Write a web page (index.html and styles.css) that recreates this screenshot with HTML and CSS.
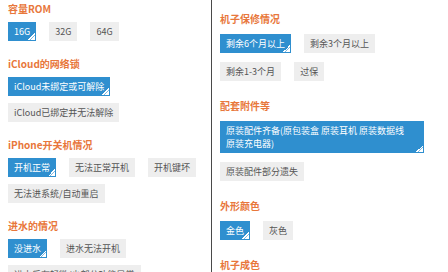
FILE: index.html
```html
<!DOCTYPE html>
<html lang="zh-CN">
<head>
<meta charset="utf-8">
<title>回收评估</title>
<link rel="stylesheet" href="styles.css">
</head>
<body>
<div class="page">
  <div class="col col-left">
    <section class="group">
      <h3 class="group-title">容量ROM</h3>
      <div class="opts">
        <span class="opt is-on">16G</span>
        <span class="opt">32G</span>
        <span class="opt">64G</span>
      </div>
    </section>
    <section class="group">
      <h3 class="group-title">iCloud的网络锁</h3>
      <div class="opts">
        <span class="opt is-on">iCloud未绑定或可解除</span>
      </div>
      <div class="opts">
        <span class="opt">iCloud已绑定并无法解除</span>
      </div>
    </section>
    <section class="group">
      <h3 class="group-title">iPhone开关机情况</h3>
      <div class="opts">
        <span class="opt is-on">开机正常</span>
        <span class="opt">无法正常开机</span>
        <span class="opt">开机键坏</span>
      </div>
      <div class="opts">
        <span class="opt">无法进系统/自动重启</span>
      </div>
    </section>
    <section class="group">
      <h3 class="group-title">进水的情况</h3>
      <div class="opts">
        <span class="opt is-on">没进水</span>
        <span class="opt">进水无法开机</span>
      </div>
      <div class="opts">
        <span class="opt">进水后有轻微/少部分功能异常</span>
      </div>
    </section>
  </div>
  <div class="col col-right">
    <section class="group">
      <h3 class="group-title">机子保修情况</h3>
      <div class="opts">
        <span class="opt is-on">剩余6个月以上</span>
        <span class="opt">剩余3个月以上</span>
      </div>
      <div class="opts">
        <span class="opt">剩余1-3个月</span>
        <span class="opt">过保</span>
      </div>
    </section>
    <section class="group">
      <h3 class="group-title">配套附件等</h3>
      <div class="opts">
        <span class="opt opt-wide is-on">原装配件齐备(原包装盒 原装耳机 原装数据线 原装充电器)</span>
      </div>
      <div class="opts">
        <span class="opt">原装配件部分遗失</span>
      </div>
    </section>
    <section class="group">
      <h3 class="group-title">外形颜色</h3>
      <div class="opts">
        <span class="opt is-on">金色</span>
        <span class="opt">灰色</span>
      </div>
    </section>
    <section class="group">
      <h3 class="group-title">机子成色</h3>
    </section>
  </div>
</div>
</body>
</html>
```

FILE: styles.css
```css
html, body {
  margin: 0;
  padding: 0;
  background: #ffffff;
}

body {
  font-family: "Noto Sans CJK SC", "Noto Sans", sans-serif;
  font-size: 9px;
  color: #555555;
  width: 448px;
  height: 272px;
  overflow: hidden;
}

.page {
  display: flex;
  align-items: stretch;
  height: 272px;
}

.col {
  display: flex;
  flex-direction: column;
  box-sizing: border-box;
}

.col-left {
  width: 212px;
  flex: 0 0 212px;
  padding: 2px 0 0 8px;
  border-right: 1px solid #4a4a4a;
  gap: 16px;
}

.col-right {
  flex: 1 1 auto;
  padding: 12px 24px 0 8px;
  gap: 18px;
}

.group {
  display: flex;
  flex-direction: column;
}

.col-left .group {
  gap: 7px;
}

.col-right .group {
  gap: 9px;
}

.group-title {
  margin: 0 0 -1px 0;
  font-size: 10px;
  line-height: 14px;
  font-weight: 700;
  color: #e8773b;
}

.opts {
  display: flex;
  flex-wrap: nowrap;
  gap: 13px;
  align-items: flex-start;
}

.opt {
  position: relative;
  display: inline-block;
  padding: 3px 6px;
  line-height: 13px;
  background: #eeeeee;
  color: #555555;
  white-space: normal;
}

.opt-wide {
  flex: 1 1 auto;
  word-break: keep-all;
}

.opt.is-on {
  background: #2f8fcf;
  color: #ffffff;
}

.opt.is-on::after {
  content: "";
  position: absolute;
  right: 1px;
  bottom: 1px;
  width: 7px;
  height: 7px;
  background: linear-gradient(135deg, transparent 50%, #ffffff 50%, #ffffff 60%, #7fb8e0 60%, #7fb8e0 70%, #ffffff 70%);
}
```
